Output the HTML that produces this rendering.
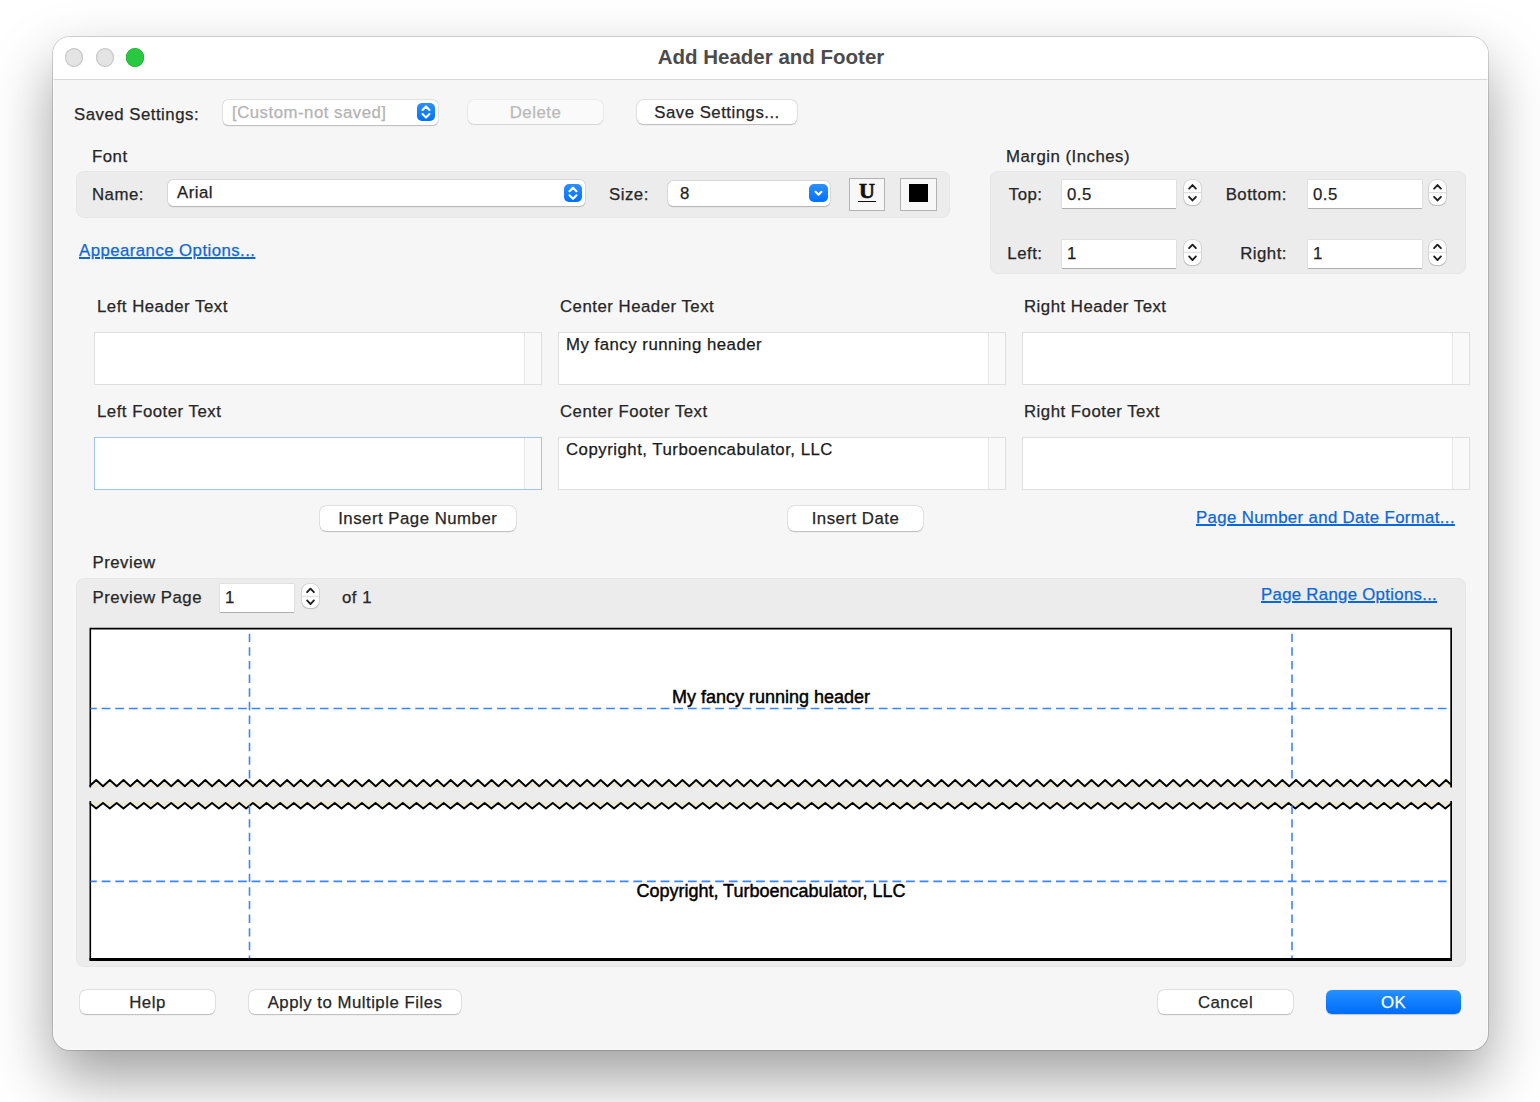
<!DOCTYPE html><html><head><meta charset="utf-8"><title>Add Header and Footer</title><style>
*{margin:0;padding:0;box-sizing:border-box}
html,body{width:1540px;height:1102px;overflow:hidden;background:#ffffff}
body{position:relative;font-family:"Liberation Sans",sans-serif}
div{position:absolute}
.t{line-height:1;white-space:pre;letter-spacing:0.5px;-webkit-text-stroke:0.25px currentColor}
.win{border-radius:17px;background:#f6f6f6;box-shadow:0 0 0 1px rgba(0,0,0,0.15),0 28px 60px 0 rgba(0,0,0,0.38);overflow:hidden}
.hl{border-radius:17px;box-shadow:inset 0 0 0 1px rgba(255,255,255,0.5);pointer-events:none}
.titlebar{background:#ffffff;border-bottom:1px solid #d9d9d9}
.tl{border-radius:50%;background:#e4e4e4;box-shadow:inset 0 0 0 1.2px #c9c9c9}
.tlg{border-radius:50%;background:#28c840;box-shadow:inset 0 0 0 0.6px #1eaa30}
.btn{background:#fff;border-radius:6px;box-shadow:0 0 0 0.5px rgba(0,0,0,0.12),0 0.8px 1.2px rgba(0,0,0,0.20)}
.btnd{background:#fafafa;border-radius:6px;box-shadow:0 0 0 0.6px rgba(0,0,0,0.08),0 1px 1px rgba(0,0,0,0.10)}
.popup{background:#fff;border-radius:5px;box-shadow:0 0 0 0.5px rgba(0,0,0,0.12),0 0.8px 1.2px rgba(0,0,0,0.20)}
.bstep{border-radius:5px;background:linear-gradient(#2c90fd,#0071fb)}
.stepper{background:#fff;border-radius:6.5px;box-shadow:0 0 0 0.6px rgba(0,0,0,0.14),0 0.8px 1px rgba(0,0,0,0.18)}
.group{background:#ececec;border-radius:8px;box-shadow:inset 0 0 0 1px rgba(0,0,0,0.025)}
.field{background:#fff;box-shadow:0 0 0 0.5px rgba(0,0,0,0.10),0 1px 0 rgba(0,0,0,0.22)}
.ta{background:#fff;border:1.6px solid #dfdfdf}
.ta.focus{border-color:#a2c2ef}
.tascroll{background:#f9f9f9;border-left:1.5px solid #e6e6e6}
.link{letter-spacing:0.3px;text-decoration:underline;text-decoration-thickness:1.7px;text-underline-offset:1.2px}
.okbtn{border-radius:6px;background:linear-gradient(#2891fd,#0f7cfd 55%,#006cfb);box-shadow:0 0.5px 1px rgba(0,0,0,0.2)}
</style></head><body>
<div class="win" style="left:53px;top:36.7px;width:1435px;height:1013.3px;"></div>
<div class="titlebar" style="left:53px;top:36.7px;width:1435px;height:43.3px;border-radius:17px 17px 0 0"></div>
<div class="tl" style="left:65.1px;top:48.400000000000006px;width:18.4px;height:18.4px"></div>
<div class="tl" style="left:95.5px;top:48.400000000000006px;width:18.4px;height:18.4px"></div>
<div class="tlg" style="left:125.8px;top:48.400000000000006px;width:18.4px;height:18.4px"></div>
<div class="t" style="left:471px;width:600px;text-align:center;top:47.15px;font-size:20.5px;color:#4b4b4b;font-weight:bold;letter-spacing:0;-webkit-text-stroke:0">Add Header and Footer</div>
<div class="t " style="left:74px;top:106.98px;font-size:16.8px;color:#262626;">Saved Settings:</div>
<div class="popup" style="left:223px;top:100px;width:215px;height:25px;"></div>
<div class="t " style="left:232px;top:105.38px;font-size:16.8px;color:#b3b3b3;">[Custom-not saved]</div>
<div class="bstep" style="left:417px;top:103px;width:18px;height:18px"><svg width="18" height="18" style="position:absolute;left:0;top:0"><polyline points="5.5,7.0 9.0,3.4000000000000004 12.5,7.0" fill="none" stroke="#fff" stroke-width="2.1" stroke-linecap="round" stroke-linejoin="round"/><polyline points="5.5,11.0 9.0,14.6 12.5,11.0" fill="none" stroke="#fff" stroke-width="2.1" stroke-linecap="round" stroke-linejoin="round"/></svg></div>
<div class="btnd" style="left:468px;top:100px;width:135px;height:24px;"></div>
<div class="t" style="left:235.5px;width:600px;text-align:center;top:105.18px;font-size:16.8px;color:#b9b9b9;">Delete</div>
<div class="btn" style="left:637px;top:100px;width:160px;height:24px;"></div>
<div class="t" style="left:417.0px;width:600px;text-align:center;top:105.18px;font-size:16.8px;color:#262626;">Save Settings...</div>
<div class="t " style="left:92px;top:149.08px;font-size:16.8px;color:#262626;">Font</div>
<div class="group" style="left:76px;top:171px;width:874px;height:46.5px;"></div>
<div class="t " style="left:92px;top:186.88px;font-size:16.8px;color:#262626;">Name:</div>
<div class="popup" style="left:168px;top:180px;width:417px;height:25.5px;"></div>
<div class="t " style="left:177px;top:185.28px;font-size:16.8px;color:#1e1e1e;">Arial</div>
<div class="bstep" style="left:564px;top:183.5px;width:18px;height:18.5px"><svg width="18" height="18.5" style="position:absolute;left:0;top:0"><polyline points="5.5,7.25 9.0,3.6500000000000004 12.5,7.25" fill="none" stroke="#fff" stroke-width="2.1" stroke-linecap="round" stroke-linejoin="round"/><polyline points="5.5,11.25 9.0,14.85 12.5,11.25" fill="none" stroke="#fff" stroke-width="2.1" stroke-linecap="round" stroke-linejoin="round"/></svg></div>
<div class="t " style="left:609px;top:187.28px;font-size:16.8px;color:#262626;">Size:</div>
<div class="popup" style="left:668px;top:181px;width:162px;height:25px;"></div>
<div class="t " style="left:680px;top:185.78px;font-size:16.8px;color:#1e1e1e;">8</div>
<div class="bstep" style="left:809px;top:184px;width:19px;height:18.30000000000001px"><svg width="19" height="18.30000000000001" style="position:absolute;left:0;top:0"><polyline points="6.6,7.750000000000005 9.5,10.750000000000005 12.4,7.750000000000005" fill="none" stroke="#fff" stroke-width="2.1" stroke-linecap="round" stroke-linejoin="round"/></svg></div>
<div class="" style="left:849px;top:177.5px;width:36px;height:33.30000000000001px;background:#f7f7f7;border:1.3px solid #b3b3b3"></div>
<div class="t" style="left:849px;width:36px;text-align:center;top:179.88000000000002px;font-family:'Liberation Serif',serif;font-weight:bold;font-size:22px;letter-spacing:0;-webkit-text-stroke:0.7px #111;color:#111">U</div>
<div class="" style="left:858px;top:200.8px;width:18px;height:1.5999999999999943px;background:#111"></div>
<div class="" style="left:900px;top:177.5px;width:37px;height:33.30000000000001px;background:#f7f7f7;border:1.3px solid #b3b3b3"></div>
<div class="" style="left:909px;top:184px;width:19px;height:18.30000000000001px;background:#000"></div>
<div class="t " style="left:1006px;top:149.38px;font-size:16.8px;color:#262626;">Margin (Inches)</div>
<div class="group" style="left:990px;top:171px;width:476px;height:103px;"></div>
<div class="t" style="left:642.5px;width:400px;text-align:right;top:186.78px;font-size:16.8px;color:#262626;">Top:</div>
<div class="field" style="left:1062px;top:180px;width:114px;height:28px;"></div>
<div class="t " style="left:1067px;top:186.78px;font-size:16.8px;color:#1e1e1e;">0.5</div>
<div class="stepper" style="left:1183.5px;top:180px;width:17.0px;height:25.30000000000001px"><svg width="17.0" height="25.30000000000001" style="position:absolute;left:0;top:0"><line x1="0" y1="12.650000000000006" x2="17.0" y2="12.650000000000006" stroke="#dadada" stroke-width="1"/><polyline points="5.1,8.550000000000006 8.5,5.050000000000006 11.9,8.550000000000006" fill="none" stroke="#1e1e1e" stroke-width="1.9" stroke-linecap="round" stroke-linejoin="round"/><polyline points="5.1,16.850000000000005 8.5,20.450000000000006 11.9,16.850000000000005" fill="none" stroke="#1e1e1e" stroke-width="1.9" stroke-linecap="round" stroke-linejoin="round"/></svg></div>
<div class="t" style="left:887px;width:400px;text-align:right;top:186.78px;font-size:16.8px;color:#262626;">Bottom:</div>
<div class="field" style="left:1308px;top:180px;width:114px;height:28px;"></div>
<div class="t " style="left:1313px;top:186.78px;font-size:16.8px;color:#1e1e1e;">0.5</div>
<div class="stepper" style="left:1429px;top:180px;width:17px;height:25.30000000000001px"><svg width="17" height="25.30000000000001" style="position:absolute;left:0;top:0"><line x1="0" y1="12.650000000000006" x2="17" y2="12.650000000000006" stroke="#dadada" stroke-width="1"/><polyline points="5.1,8.550000000000006 8.5,5.050000000000006 11.9,8.550000000000006" fill="none" stroke="#1e1e1e" stroke-width="1.9" stroke-linecap="round" stroke-linejoin="round"/><polyline points="5.1,16.850000000000005 8.5,20.450000000000006 11.9,16.850000000000005" fill="none" stroke="#1e1e1e" stroke-width="1.9" stroke-linecap="round" stroke-linejoin="round"/></svg></div>
<div class="t" style="left:642.5px;width:400px;text-align:right;top:246.08px;font-size:16.8px;color:#262626;">Left:</div>
<div class="field" style="left:1062px;top:240px;width:114px;height:27.5px;"></div>
<div class="t " style="left:1067px;top:246.08px;font-size:16.8px;color:#1e1e1e;">1</div>
<div class="stepper" style="left:1183.5px;top:240px;width:17.0px;height:24.5px"><svg width="17.0" height="24.5" style="position:absolute;left:0;top:0"><line x1="0" y1="12.25" x2="17.0" y2="12.25" stroke="#dadada" stroke-width="1"/><polyline points="5.1,8.15 8.5,4.65 11.9,8.15" fill="none" stroke="#1e1e1e" stroke-width="1.9" stroke-linecap="round" stroke-linejoin="round"/><polyline points="5.1,16.45 8.5,20.05 11.9,16.45" fill="none" stroke="#1e1e1e" stroke-width="1.9" stroke-linecap="round" stroke-linejoin="round"/></svg></div>
<div class="t" style="left:887px;width:400px;text-align:right;top:246.08px;font-size:16.8px;color:#262626;">Right:</div>
<div class="field" style="left:1308px;top:240px;width:114px;height:27.5px;"></div>
<div class="t " style="left:1313px;top:246.08px;font-size:16.8px;color:#1e1e1e;">1</div>
<div class="stepper" style="left:1429px;top:240px;width:17px;height:24.5px"><svg width="17" height="24.5" style="position:absolute;left:0;top:0"><line x1="0" y1="12.25" x2="17" y2="12.25" stroke="#dadada" stroke-width="1"/><polyline points="5.1,8.15 8.5,4.65 11.9,8.15" fill="none" stroke="#1e1e1e" stroke-width="1.9" stroke-linecap="round" stroke-linejoin="round"/><polyline points="5.1,16.45 8.5,20.05 11.9,16.45" fill="none" stroke="#1e1e1e" stroke-width="1.9" stroke-linecap="round" stroke-linejoin="round"/></svg></div>
<div class="t link" style="left:79px;top:242.98px;font-size:16.8px;color:#0d67d9;letter-spacing:0.45px">Appearance Options...</div>
<div class="t " style="left:97px;top:299.08px;font-size:16.8px;color:#262626;">Left Header Text</div>
<div class="t " style="left:97px;top:404.08px;font-size:16.8px;color:#262626;">Left Footer Text</div>
<div class="t " style="left:560px;top:299.08px;font-size:16.8px;color:#262626;">Center Header Text</div>
<div class="t " style="left:560px;top:404.08px;font-size:16.8px;color:#262626;">Center Footer Text</div>
<div class="t " style="left:1024px;top:299.08px;font-size:16.8px;color:#262626;">Right Header Text</div>
<div class="t " style="left:1024px;top:404.08px;font-size:16.8px;color:#262626;">Right Footer Text</div>
<div class="ta" style="left:94px;top:332px;width:448px;height:53px;"></div>
<div class="tascroll" style="left:524px;top:333px;width:17px;height:51px;"></div>
<div class="ta" style="left:558px;top:332px;width:448px;height:53px;"></div>
<div class="tascroll" style="left:988px;top:333px;width:17px;height:51px;"></div>
<div class="t " style="left:566px;top:336.98px;font-size:16.8px;color:#1a1a1a;">My fancy running header</div>
<div class="ta" style="left:1022px;top:332px;width:448px;height:53px;"></div>
<div class="tascroll" style="left:1452px;top:333px;width:17px;height:51px;"></div>
<div class="ta focus" style="left:94px;top:437px;width:448px;height:52.5px;"></div>
<div class="tascroll" style="left:524px;top:438px;width:17px;height:50.5px;"></div>
<div class="ta" style="left:558px;top:437px;width:448px;height:52.5px;"></div>
<div class="tascroll" style="left:988px;top:438px;width:17px;height:50.5px;"></div>
<div class="t " style="left:566px;top:441.98px;font-size:16.8px;color:#1a1a1a;">Copyright, Turboencabulator, LLC</div>
<div class="ta" style="left:1022px;top:437px;width:448px;height:52.5px;"></div>
<div class="tascroll" style="left:1452px;top:438px;width:17px;height:50.5px;"></div>
<div class="btn" style="left:320px;top:506px;width:195.5px;height:25px;"></div>
<div class="t" style="left:117.75px;width:600px;text-align:center;top:511.08px;font-size:16.8px;color:#262626;">Insert Page Number</div>
<div class="btn" style="left:788px;top:506px;width:135px;height:25px;"></div>
<div class="t" style="left:555.5px;width:600px;text-align:center;top:511.08px;font-size:16.8px;color:#262626;">Insert Date</div>
<div class="t link" style="left:1196px;top:509.88px;font-size:16.8px;color:#0d67d9;letter-spacing:0.36px">Page Number and Date Format...</div>
<div class="t " style="left:92.5px;top:555.08px;font-size:16.8px;color:#262626;">Preview</div>
<div class="group" style="left:76px;top:578px;width:1390px;height:388.5px;"></div>
<div class="t " style="left:92.5px;top:589.98px;font-size:16.8px;color:#262626;">Preview Page</div>
<div class="field" style="left:220px;top:584px;width:74px;height:27.5px;"></div>
<div class="t " style="left:225px;top:589.98px;font-size:16.8px;color:#1e1e1e;">1</div>
<div class="stepper" style="left:301.5px;top:583.5px;width:17.0px;height:24.5px"><svg width="17.0" height="24.5" style="position:absolute;left:0;top:0"><line x1="0" y1="12.25" x2="17.0" y2="12.25" stroke="#dadada" stroke-width="1"/><polyline points="5.1,8.15 8.5,4.65 11.9,8.15" fill="none" stroke="#1e1e1e" stroke-width="1.9" stroke-linecap="round" stroke-linejoin="round"/><polyline points="5.1,16.45 8.5,20.05 11.9,16.45" fill="none" stroke="#1e1e1e" stroke-width="1.9" stroke-linecap="round" stroke-linejoin="round"/></svg></div>
<div class="t " style="left:342px;top:589.98px;font-size:16.8px;color:#262626;">of 1</div>
<div class="t link" style="left:1261px;top:586.88px;font-size:16.8px;color:#0d67d9;">Page Range Options...</div>
<svg width="1540" height="1102" style="position:absolute;left:0;top:0"><defs><clipPath id="pc"><rect x="89.3" y="600" width="1362.8" height="400"/></clipPath></defs><g clip-path="url(#pc)"><path d="M90.5,628.7 L1451,628.7 L1451,787 L90.5,787 Z" fill="#ece9d8"/><polygon points="90.5,628.7 1451,628.7 1452.00,785.47 1445.98,780.00 1439.17,786.20 1432.35,780.00 1425.53,786.20 1418.72,780.00 1411.90,786.20 1405.08,780.00 1398.26,786.20 1391.45,780.00 1384.63,786.20 1377.81,780.00 1371.00,786.20 1364.18,780.00 1357.36,786.20 1350.55,780.00 1343.73,786.20 1336.91,780.00 1330.09,786.20 1323.28,780.00 1316.46,786.20 1309.64,780.00 1302.83,786.20 1296.01,780.00 1289.19,786.20 1282.38,780.00 1275.56,786.20 1268.74,780.00 1261.92,786.20 1255.11,780.00 1248.29,786.20 1241.47,780.00 1234.66,786.20 1227.84,780.00 1221.02,786.20 1214.21,780.00 1207.39,786.20 1200.57,780.00 1193.75,786.20 1186.94,780.00 1180.12,786.20 1173.30,780.00 1166.49,786.20 1159.67,780.00 1152.85,786.20 1146.04,780.00 1139.22,786.20 1132.40,780.00 1125.58,786.20 1118.77,780.00 1111.95,786.20 1105.13,780.00 1098.32,786.20 1091.50,780.00 1084.68,786.20 1077.87,780.00 1071.05,786.20 1064.23,780.00 1057.41,786.20 1050.60,780.00 1043.78,786.20 1036.96,780.00 1030.15,786.20 1023.33,780.00 1016.51,786.20 1009.70,780.00 1002.88,786.20 996.06,780.00 989.24,786.20 982.43,780.00 975.61,786.20 968.79,780.00 961.98,786.20 955.16,780.00 948.34,786.20 941.53,780.00 934.71,786.20 927.89,780.00 921.07,786.20 914.26,780.00 907.44,786.20 900.62,780.00 893.81,786.20 886.99,780.00 880.17,786.20 873.36,780.00 866.54,786.20 859.72,780.00 852.90,786.20 846.09,780.00 839.27,786.20 832.45,780.00 825.64,786.20 818.82,780.00 812.00,786.20 805.19,780.00 798.37,786.20 791.55,780.00 784.73,786.20 777.92,780.00 771.10,786.20 764.28,780.00 757.47,786.20 750.65,780.00 743.83,786.20 737.02,780.00 730.20,786.20 723.38,780.00 716.56,786.20 709.75,780.00 702.93,786.20 696.11,780.00 689.30,786.20 682.48,780.00 675.66,786.20 668.85,780.00 662.03,786.20 655.21,780.00 648.39,786.20 641.58,780.00 634.76,786.20 627.94,780.00 621.13,786.20 614.31,780.00 607.49,786.20 600.68,780.00 593.86,786.20 587.04,780.00 580.22,786.20 573.41,780.00 566.59,786.20 559.77,780.00 552.96,786.20 546.14,780.00 539.32,786.20 532.51,780.00 525.69,786.20 518.87,780.00 512.05,786.20 505.24,780.00 498.42,786.20 491.60,780.00 484.79,786.20 477.97,780.00 471.15,786.20 464.34,780.00 457.52,786.20 450.70,780.00 443.88,786.20 437.07,780.00 430.25,786.20 423.43,780.00 416.62,786.20 409.80,780.00 402.98,786.20 396.17,780.00 389.35,786.20 382.53,780.00 375.71,786.20 368.90,780.00 362.08,786.20 355.26,780.00 348.45,786.20 341.63,780.00 334.81,786.20 328.00,780.00 321.18,786.20 314.36,780.00 307.54,786.20 300.73,780.00 293.91,786.20 287.09,780.00 280.28,786.20 273.46,780.00 266.64,786.20 259.83,780.00 253.01,786.20 246.19,780.00 239.37,786.20 232.56,780.00 225.74,786.20 218.92,780.00 212.11,786.20 205.29,780.00 198.47,786.20 191.66,780.00 184.84,786.20 178.02,780.00 171.20,786.20 164.39,780.00 157.57,786.20 150.75,780.00 143.94,786.20 137.12,780.00 130.30,786.20 123.49,780.00 116.67,786.20 109.85,780.00 103.03,786.20 96.22,780.00 89.40,786.20" fill="#fff"/><polyline points="89.40,786.20 96.22,780.00 103.03,786.20 109.85,780.00 116.67,786.20 123.49,780.00 130.30,786.20 137.12,780.00 143.94,786.20 150.75,780.00 157.57,786.20 164.39,780.00 171.20,786.20 178.02,780.00 184.84,786.20 191.66,780.00 198.47,786.20 205.29,780.00 212.11,786.20 218.92,780.00 225.74,786.20 232.56,780.00 239.37,786.20 246.19,780.00 253.01,786.20 259.83,780.00 266.64,786.20 273.46,780.00 280.28,786.20 287.09,780.00 293.91,786.20 300.73,780.00 307.54,786.20 314.36,780.00 321.18,786.20 328.00,780.00 334.81,786.20 341.63,780.00 348.45,786.20 355.26,780.00 362.08,786.20 368.90,780.00 375.71,786.20 382.53,780.00 389.35,786.20 396.17,780.00 402.98,786.20 409.80,780.00 416.62,786.20 423.43,780.00 430.25,786.20 437.07,780.00 443.88,786.20 450.70,780.00 457.52,786.20 464.34,780.00 471.15,786.20 477.97,780.00 484.79,786.20 491.60,780.00 498.42,786.20 505.24,780.00 512.05,786.20 518.87,780.00 525.69,786.20 532.51,780.00 539.32,786.20 546.14,780.00 552.96,786.20 559.77,780.00 566.59,786.20 573.41,780.00 580.22,786.20 587.04,780.00 593.86,786.20 600.68,780.00 607.49,786.20 614.31,780.00 621.13,786.20 627.94,780.00 634.76,786.20 641.58,780.00 648.39,786.20 655.21,780.00 662.03,786.20 668.85,780.00 675.66,786.20 682.48,780.00 689.30,786.20 696.11,780.00 702.93,786.20 709.75,780.00 716.56,786.20 723.38,780.00 730.20,786.20 737.02,780.00 743.83,786.20 750.65,780.00 757.47,786.20 764.28,780.00 771.10,786.20 777.92,780.00 784.73,786.20 791.55,780.00 798.37,786.20 805.19,780.00 812.00,786.20 818.82,780.00 825.64,786.20 832.45,780.00 839.27,786.20 846.09,780.00 852.90,786.20 859.72,780.00 866.54,786.20 873.36,780.00 880.17,786.20 886.99,780.00 893.81,786.20 900.62,780.00 907.44,786.20 914.26,780.00 921.07,786.20 927.89,780.00 934.71,786.20 941.53,780.00 948.34,786.20 955.16,780.00 961.98,786.20 968.79,780.00 975.61,786.20 982.43,780.00 989.24,786.20 996.06,780.00 1002.88,786.20 1009.70,780.00 1016.51,786.20 1023.33,780.00 1030.15,786.20 1036.96,780.00 1043.78,786.20 1050.60,780.00 1057.41,786.20 1064.23,780.00 1071.05,786.20 1077.87,780.00 1084.68,786.20 1091.50,780.00 1098.32,786.20 1105.13,780.00 1111.95,786.20 1118.77,780.00 1125.58,786.20 1132.40,780.00 1139.22,786.20 1146.04,780.00 1152.85,786.20 1159.67,780.00 1166.49,786.20 1173.30,780.00 1180.12,786.20 1186.94,780.00 1193.75,786.20 1200.57,780.00 1207.39,786.20 1214.21,780.00 1221.02,786.20 1227.84,780.00 1234.66,786.20 1241.47,780.00 1248.29,786.20 1255.11,780.00 1261.92,786.20 1268.74,780.00 1275.56,786.20 1282.38,780.00 1289.19,786.20 1296.01,780.00 1302.83,786.20 1309.64,780.00 1316.46,786.20 1323.28,780.00 1330.09,786.20 1336.91,780.00 1343.73,786.20 1350.55,780.00 1357.36,786.20 1364.18,780.00 1371.00,786.20 1377.81,780.00 1384.63,786.20 1391.45,780.00 1398.26,786.20 1405.08,780.00 1411.90,786.20 1418.72,780.00 1425.53,786.20 1432.35,780.00 1439.17,786.20 1445.98,780.00 1452.00,785.47" fill="none" stroke="#000" stroke-width="1.9" stroke-linejoin="round"/><path d="M90.2,787.5 L90.2,628.6 L1451.2,628.6 L1451.2,787.5" fill="none" stroke="#000" stroke-width="1.8"/><path d="M90.5,801 L1451,801 L1451,959 L90.5,959 Z" fill="#ece9d8"/><polygon points="90.5,959 89.40,802.90 96.21,808.50 103.03,802.90 109.84,808.50 116.65,802.90 123.47,808.50 130.28,802.90 137.09,808.50 143.91,802.90 150.72,808.50 157.54,802.90 164.35,808.50 171.16,802.90 177.98,808.50 184.79,802.90 191.60,808.50 198.42,802.90 205.23,808.50 212.04,802.90 218.86,808.50 225.67,802.90 232.48,808.50 239.30,802.90 246.11,808.50 252.92,802.90 259.74,808.50 266.55,802.90 273.36,808.50 280.18,802.90 286.99,808.50 293.81,802.90 300.62,808.50 307.43,802.90 314.25,808.50 321.06,802.90 327.87,808.50 334.69,802.90 341.50,808.50 348.31,802.90 355.13,808.50 361.94,802.90 368.75,808.50 375.57,802.90 382.38,808.50 389.19,802.90 396.01,808.50 402.82,802.90 409.63,808.50 416.45,802.90 423.26,808.50 430.07,802.90 436.89,808.50 443.70,802.90 450.52,808.50 457.33,802.90 464.14,808.50 470.96,802.90 477.77,808.50 484.58,802.90 491.40,808.50 498.21,802.90 505.02,808.50 511.84,802.90 518.65,808.50 525.46,802.90 532.28,808.50 539.09,802.90 545.90,808.50 552.72,802.90 559.53,808.50 566.34,802.90 573.16,808.50 579.97,802.90 586.79,808.50 593.60,802.90 600.41,808.50 607.23,802.90 614.04,808.50 620.85,802.90 627.67,808.50 634.48,802.90 641.29,808.50 648.11,802.90 654.92,808.50 661.73,802.90 668.55,808.50 675.36,802.90 682.17,808.50 688.99,802.90 695.80,808.50 702.61,802.90 709.43,808.50 716.24,802.90 723.06,808.50 729.87,802.90 736.68,808.50 743.50,802.90 750.31,808.50 757.12,802.90 763.94,808.50 770.75,802.90 777.56,808.50 784.38,802.90 791.19,808.50 798.00,802.90 804.82,808.50 811.63,802.90 818.44,808.50 825.26,802.90 832.07,808.50 838.88,802.90 845.70,808.50 852.51,802.90 859.33,808.50 866.14,802.90 872.95,808.50 879.77,802.90 886.58,808.50 893.39,802.90 900.21,808.50 907.02,802.90 913.83,808.50 920.65,802.90 927.46,808.50 934.27,802.90 941.09,808.50 947.90,802.90 954.71,808.50 961.53,802.90 968.34,808.50 975.15,802.90 981.97,808.50 988.78,802.90 995.60,808.50 1002.41,802.90 1009.22,808.50 1016.04,802.90 1022.85,808.50 1029.66,802.90 1036.48,808.50 1043.29,802.90 1050.10,808.50 1056.92,802.90 1063.73,808.50 1070.54,802.90 1077.36,808.50 1084.17,802.90 1090.98,808.50 1097.80,802.90 1104.61,808.50 1111.42,802.90 1118.24,808.50 1125.05,802.90 1131.87,808.50 1138.68,802.90 1145.49,808.50 1152.31,802.90 1159.12,808.50 1165.93,802.90 1172.75,808.50 1179.56,802.90 1186.37,808.50 1193.19,802.90 1200.00,808.50 1206.81,802.90 1213.63,808.50 1220.44,802.90 1227.25,808.50 1234.07,802.90 1240.88,808.50 1247.69,802.90 1254.51,808.50 1261.32,802.90 1268.14,808.50 1274.95,802.90 1281.76,808.50 1288.58,802.90 1295.39,808.50 1302.20,802.90 1309.02,808.50 1315.83,802.90 1322.64,808.50 1329.46,802.90 1336.27,808.50 1343.08,802.90 1349.90,808.50 1356.71,802.90 1363.52,808.50 1370.34,802.90 1377.15,808.50 1383.96,802.90 1390.78,808.50 1397.59,802.90 1404.41,808.50 1411.22,802.90 1418.03,808.50 1424.85,802.90 1431.66,808.50 1438.47,802.90 1445.29,808.50 1452.00,802.98 1451,959" fill="#fff"/><polyline points="89.40,802.90 96.21,808.50 103.03,802.90 109.84,808.50 116.65,802.90 123.47,808.50 130.28,802.90 137.09,808.50 143.91,802.90 150.72,808.50 157.54,802.90 164.35,808.50 171.16,802.90 177.98,808.50 184.79,802.90 191.60,808.50 198.42,802.90 205.23,808.50 212.04,802.90 218.86,808.50 225.67,802.90 232.48,808.50 239.30,802.90 246.11,808.50 252.92,802.90 259.74,808.50 266.55,802.90 273.36,808.50 280.18,802.90 286.99,808.50 293.81,802.90 300.62,808.50 307.43,802.90 314.25,808.50 321.06,802.90 327.87,808.50 334.69,802.90 341.50,808.50 348.31,802.90 355.13,808.50 361.94,802.90 368.75,808.50 375.57,802.90 382.38,808.50 389.19,802.90 396.01,808.50 402.82,802.90 409.63,808.50 416.45,802.90 423.26,808.50 430.07,802.90 436.89,808.50 443.70,802.90 450.52,808.50 457.33,802.90 464.14,808.50 470.96,802.90 477.77,808.50 484.58,802.90 491.40,808.50 498.21,802.90 505.02,808.50 511.84,802.90 518.65,808.50 525.46,802.90 532.28,808.50 539.09,802.90 545.90,808.50 552.72,802.90 559.53,808.50 566.34,802.90 573.16,808.50 579.97,802.90 586.79,808.50 593.60,802.90 600.41,808.50 607.23,802.90 614.04,808.50 620.85,802.90 627.67,808.50 634.48,802.90 641.29,808.50 648.11,802.90 654.92,808.50 661.73,802.90 668.55,808.50 675.36,802.90 682.17,808.50 688.99,802.90 695.80,808.50 702.61,802.90 709.43,808.50 716.24,802.90 723.06,808.50 729.87,802.90 736.68,808.50 743.50,802.90 750.31,808.50 757.12,802.90 763.94,808.50 770.75,802.90 777.56,808.50 784.38,802.90 791.19,808.50 798.00,802.90 804.82,808.50 811.63,802.90 818.44,808.50 825.26,802.90 832.07,808.50 838.88,802.90 845.70,808.50 852.51,802.90 859.33,808.50 866.14,802.90 872.95,808.50 879.77,802.90 886.58,808.50 893.39,802.90 900.21,808.50 907.02,802.90 913.83,808.50 920.65,802.90 927.46,808.50 934.27,802.90 941.09,808.50 947.90,802.90 954.71,808.50 961.53,802.90 968.34,808.50 975.15,802.90 981.97,808.50 988.78,802.90 995.60,808.50 1002.41,802.90 1009.22,808.50 1016.04,802.90 1022.85,808.50 1029.66,802.90 1036.48,808.50 1043.29,802.90 1050.10,808.50 1056.92,802.90 1063.73,808.50 1070.54,802.90 1077.36,808.50 1084.17,802.90 1090.98,808.50 1097.80,802.90 1104.61,808.50 1111.42,802.90 1118.24,808.50 1125.05,802.90 1131.87,808.50 1138.68,802.90 1145.49,808.50 1152.31,802.90 1159.12,808.50 1165.93,802.90 1172.75,808.50 1179.56,802.90 1186.37,808.50 1193.19,802.90 1200.00,808.50 1206.81,802.90 1213.63,808.50 1220.44,802.90 1227.25,808.50 1234.07,802.90 1240.88,808.50 1247.69,802.90 1254.51,808.50 1261.32,802.90 1268.14,808.50 1274.95,802.90 1281.76,808.50 1288.58,802.90 1295.39,808.50 1302.20,802.90 1309.02,808.50 1315.83,802.90 1322.64,808.50 1329.46,802.90 1336.27,808.50 1343.08,802.90 1349.90,808.50 1356.71,802.90 1363.52,808.50 1370.34,802.90 1377.15,808.50 1383.96,802.90 1390.78,808.50 1397.59,802.90 1404.41,808.50 1411.22,802.90 1418.03,808.50 1424.85,802.90 1431.66,808.50 1438.47,802.90 1445.29,808.50 1452.00,802.98" fill="none" stroke="#000" stroke-width="1.9" stroke-linejoin="round"/><path d="M90.2,801 L90.2,959.3 L1451.2,959.3 L1451.2,801" fill="none" stroke="#000" stroke-width="1.8"/><line x1="89.3" y1="959.5" x2="1452.1" y2="959.5" stroke="#000" stroke-width="3"/><line x1="249.5" y1="633.7" x2="249.5" y2="782" stroke="#3a86f7" stroke-width="1.6" stroke-dasharray="8.4 5.234"/><line x1="1292" y1="633.7" x2="1292" y2="782" stroke="#3a86f7" stroke-width="1.6" stroke-dasharray="8.4 5.234"/><line x1="90.5" y1="708.5" x2="1450" y2="708.5" stroke="#3a86f7" stroke-width="1.6" stroke-dasharray="8.8 4.834" stroke-dashoffset="2.5"/><line x1="249.5" y1="805.5" x2="249.5" y2="958" stroke="#3a86f7" stroke-width="1.6" stroke-dasharray="8.4 5.234"/><line x1="1292" y1="805.5" x2="1292" y2="958" stroke="#3a86f7" stroke-width="1.6" stroke-dasharray="8.4 5.234"/><line x1="90.5" y1="881.4" x2="1450" y2="881.4" stroke="#3a86f7" stroke-width="1.6" stroke-dasharray="8.8 4.834" stroke-dashoffset="2.5"/></g></svg>
<div class="t" style="left:471px;width:600px;text-align:center;top:687.76px;font-size:18px;color:#000;letter-spacing:0;-webkit-text-stroke:0.45px #000">My fancy running header</div>
<div class="t" style="left:471px;width:600px;text-align:center;top:881.96px;font-size:18px;color:#000;letter-spacing:0;-webkit-text-stroke:0.45px #000">Copyright, Turboencabulator, LLC</div>
<div class="btn" style="left:80px;top:990px;width:135px;height:24px;"></div>
<div class="t" style="left:-152.5px;width:600px;text-align:center;top:995.08px;font-size:16.8px;color:#262626;">Help</div>
<div class="btn" style="left:249px;top:990px;width:212px;height:24px;"></div>
<div class="t" style="left:55.0px;width:600px;text-align:center;top:995.08px;font-size:16.8px;color:#262626;">Apply to Multiple Files</div>
<div class="btn" style="left:1158px;top:989.5px;width:135px;height:24.5px;"></div>
<div class="t" style="left:925.5px;width:600px;text-align:center;top:995.08px;font-size:16.8px;color:#262626;">Cancel</div>
<div class="okbtn" style="left:1326px;top:990px;width:135px;height:24px;"></div>
<div class="t" style="left:1093.5px;width:600px;text-align:center;top:995.08px;font-size:16.8px;color:#fff;">OK</div>
<div class="hl" style="left:53px;top:36.7px;width:1435px;height:1013.3px;"></div>
</body></html>
